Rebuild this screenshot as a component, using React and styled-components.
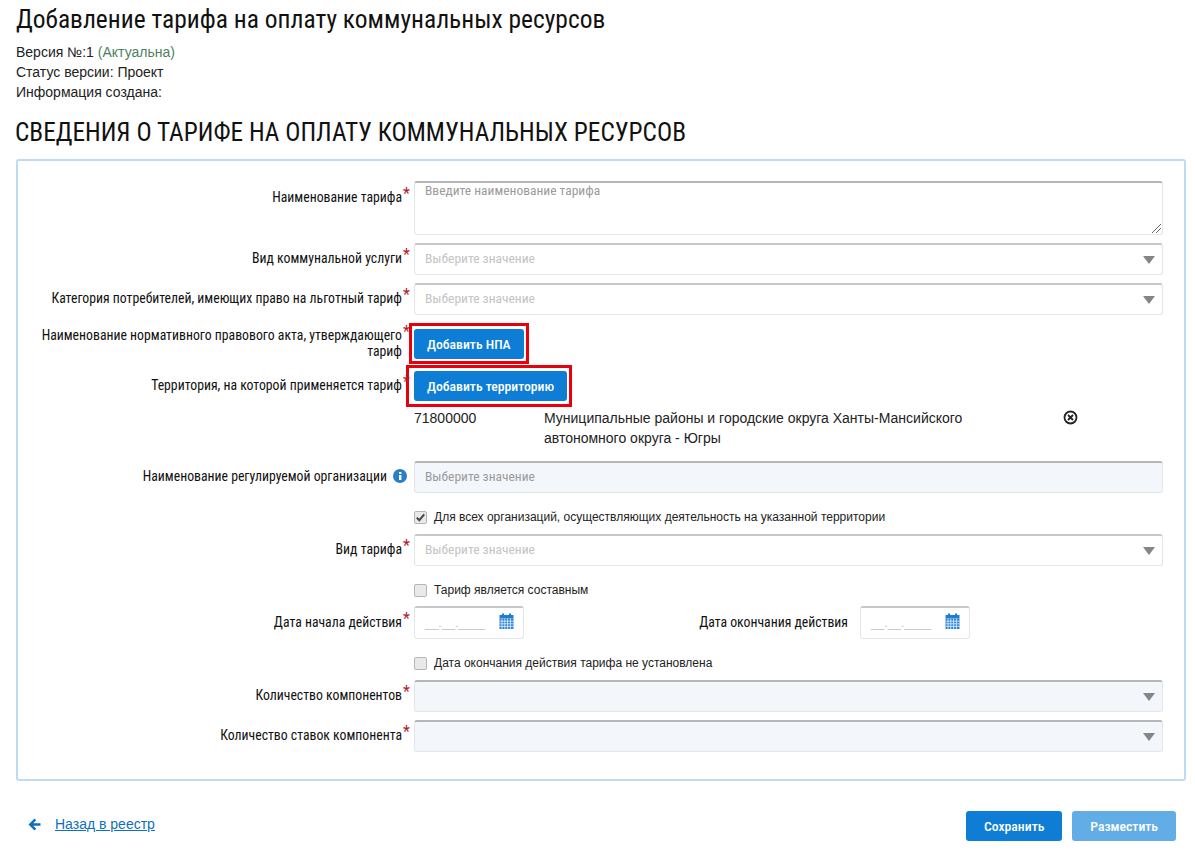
import React from 'react';
import styled, { createGlobalStyle } from 'styled-components';

const GlobalStyle = createGlobalStyle`
  html, body {
    margin: 0;
    padding: 0;
    background: #fff;
    color: #111;
    font-family: "Liberation Sans", Arial, sans-serif;
    font-size: 14px;
  }
  * { box-sizing: border-box; }
`;

const narrow = `"Liberation Sans Narrow", "Roboto Condensed", Roboto, sans-serif`;

const Page = styled.div`
  width: 1195px;
  height: 851px;
  overflow: hidden;
  padding: 5px 9px 0 16px;
`;

const Title = styled.h1`
  margin: 0;
  font: 400 25.45px/28px ${narrow};
  color: #111;
`;

const Meta = styled.div`
  margin-top: 9px;
  font-size: 14px;
  line-height: 20px;
  color: #222;
`;

const Actual = styled.span`
  color: #4f7f62;
`;

const SectionTitle = styled.h2`
  margin: 16px 0 0 -1px;
  font: 400 25.3px/30px ${narrow};
  color: #111;
`;

const Panel = styled.div`
  margin-top: 11px;
  width: 1170px;
  height: 622px;
  border: 2px solid #bcdcf6;
  border-radius: 3px;
  padding: 20px 21px 0 0;
`;

const Row = styled.div`
  display: flex;
  align-items: ${p => p.$align || 'center'};
  margin-bottom: ${p => p.$mb ?? 8}px;
`;

const Label = styled.div`
  flex: 0 0 396px;
  text-align: right;
  font: 400 13.75px/16px ${narrow};
  color: #111;
  padding-top: ${p => p.$pt || 0}px;
  padding-bottom: ${p => (p.$pt ? 0 : 2)}px;
`;

const LabelWrap = styled.span`
  position: relative;
  display: inline-block;
  padding-right: ${p => p.$pr || 12}px;
  width: ${p => (p.$block ? '100%' : 'auto')};
`;

const Star = styled.span`
  position: absolute;
  right: 4px;
  top: -3px;
  color: #b3202a;
  font-size: 16px;
  line-height: 16px;
`;

const Field = styled.div`
  flex: 1;
  position: relative;
  height: ${p => p.$h || 32}px;
  border: 1px solid #e3e6e9;
  border-top: 2px solid ${p => (p.$dark ? '#b4b6b8' : '#c6c8ca')};
  border-radius: 3px;
  background: ${p => (p.$disabled ? '#f3f6fb' : '#fff')};
  padding: ${p => (p.$top ? '0 10px' : '0 10px 3px')};
  display: flex;
  align-items: ${p => (p.$top ? 'flex-start' : 'center')};
  font: 400 13.5px/15px ${narrow};
  color: ${p => (p.$strong ? '#9b9b9b' : '#c4c4c4')};
`;

const Caret = styled.span`
  position: absolute;
  right: 7px;
  top: 11px;
  width: 0;
  height: 0;
  border-left: 6px solid transparent;
  border-right: 6px solid transparent;
  border-top: 8px solid #858585;
`;

const Grip = styled.svg`
  position: absolute;
  right: 0;
  bottom: 0;
`;

const Highlight = styled.div`
  border: 3px solid #e8000d;
  padding: ${p => p.$pad};
  margin-left: ${p => p.$ml}px;
  display: flex;
`;

const Btn = styled.button`
  height: 30px;
  padding: 0 ${p => p.$px || 13}px;
  border: 0;
  border-radius: 3px;
  background: ${p => (p.$muted ? '#63ade6' : '#0d7dd6')};
  color: #fff;
  font: 500 13.7px/16px ${narrow};
`;

const Territory = styled.div`
  display: grid;
  grid-template-columns: 130px 519px 20px;
  margin-left: 396px;
  font-size: 14px;
  line-height: 20px;
  color: #222;
  height: 54px;
  padding-top: 1px;
`;

const TerritoryName = styled.div`
  width: 430px;
`;

const CloseCell = styled.div`
  display: flex;
  height: 16px;
  margin-top: 2px;
`;

const CheckRow = styled.label`
  display: flex;
  align-items: center;
  margin: 0 0 ${p => p.$mb || 0}px 396px;
  height: 16px;
  font-size: 12px;
  color: #222;
`;

const Box = styled.span`
  width: 13px;
  height: 13px;
  border: 1px solid #b5b5b5;
  border-radius: 2px;
  background: #e9e9e9;
  margin-right: 7px;
  display: inline-flex;
  align-items: center;
  justify-content: center;
`;

const DateField = styled.div`
  position: relative;
  width: 110px;
  height: 33px;
  border: 1px solid #e3e6e9;
  border-top: 2px solid #c6c8ca;
  border-radius: 3px;
  padding: 0 10px;
  display: flex;
  align-items: center;
  font-size: 12px;
  color: #c4c4c4;
`;

const CalIcon = styled.svg`
  position: absolute;
  right: 9px;
  top: 5px;
`;

const DateEndLabel = styled.div`
  width: 336px;
  padding: 0 12px 2px 0;
  text-align: right;
  font: 400 13.75px/16px ${narrow};
  color: #111;
`;

const Footer = styled.div`
  display: flex;
  justify-content: space-between;
  align-items: center;
  margin-top: 30px;
  width: 1160px;
`;

const Back = styled.a`
  display: flex;
  align-items: center;
  margin: -4px 0 0 12px;
  color: #0d6fc0;
  font-size: 14px;
  text-decoration: underline;
  gap: 14px;
`;

const FooterButtons = styled.div`
  display: flex;
  gap: 10px;
`;

const InfoDot = styled.svg`
  position: absolute;
  right: 7px;
  top: 1px;
`;

const Req = ({ children, block }) => (
  <LabelWrap $block={block}>
    {children}
    <Star>*</Star>
  </LabelWrap>
);

const SelectField = ({ disabled, placeholder = 'Выберите значение', dark }) => (
  <Field $disabled={disabled} $dark={dark}>
    {placeholder}
    <Caret />
  </Field>
);

const Tick = () => (
  <svg width="11" height="11" viewBox="0 0 11 11">
    <path d="M1.8 5.6 L4.3 8.3 L9.2 2.4" fill="none" stroke="#444" strokeWidth="2" />
  </svg>
);

const Calendar = () => (
  <CalIcon width="15" height="17" viewBox="0 0 15 17">
    <rect x="0.5" y="2" width="14" height="3.5" fill="#1e7fd2" />
    <rect x="3" y="0.5" width="2" height="3" fill="#1e7fd2" />
    <rect x="10" y="0.5" width="2" height="3" fill="#1e7fd2" />
    <rect x="0.5" y="5.5" width="14" height="10.5" fill="#2a84d8" />
    <path d="M3 5.5V16M5.8 5.5V16M8.6 5.5V16M11.4 5.5V16M.5 8.2H14.5M.5 10.8H14.5M.5 13.4H14.5" stroke="#fff" strokeWidth="0.7" />
  </CalIcon>
);

export default function App() {
  return (
    <Page>
      <GlobalStyle />
      <Title>Добавление тарифа на оплату коммунальных ресурсов</Title>
      <Meta>
        <div>Версия №:1 <Actual>(Актуальна)</Actual></div>
        <div>Статус версии: Проект</div>
        <div>Информация создана:</div>
      </Meta>
      <SectionTitle>СВЕДЕНИЯ О ТАРИФЕ НА ОПЛАТУ КОММУНАЛЬНЫХ РЕСУРСОВ</SectionTitle>
      <Panel>
        <Row $align="flex-start">
          <Label $pt={8}><Req>Наименование тарифа</Req></Label>
          <Field $h={54} $top $dark $strong>
            Введите наименование тарифа
            <Grip width="12" height="12" viewBox="0 0 12 12">
              <path d="M2 11 L11 2 M6 11 L11 6" stroke="#666" strokeWidth="1" />
            </Grip>
          </Field>
        </Row>
        <Row>
          <Label><Req>Вид коммунальной услуги</Req></Label>
          <SelectField />
        </Row>
        <Row>
          <Label><Req>Категория потребителей, имеющих право на льготный тариф</Req></Label>
          <SelectField />
        </Row>
        <Row $mb={1}>
          <Label><Req block>Наименование нормативного правового акта, утверждающего тариф</Req></Label>
          <Highlight $ml={-5} $pad="3px 2px 2px">
            <Btn>Добавить НПА</Btn>
          </Highlight>
        </Row>
        <Row $mb={0}>
          <Label><Req>Территория, на которой применяется тариф</Req></Label>
          <Highlight $ml={-8} $pad="3px 2px 3px 5px">
            <Btn>Добавить территорию</Btn>
          </Highlight>
        </Row>
        <Territory>
          <div>71800000</div>
          <TerritoryName>Муниципальные районы и городские округа Ханты-Мансийского автономного округа - Югры</TerritoryName>
          <CloseCell>
            <svg width="15" height="15" viewBox="0 0 15 15">
              <circle cx="7.5" cy="7.5" r="6" fill="none" stroke="#222" strokeWidth="1.8" />
              <path d="M5 5 L10 10 M10 5 L5 10" stroke="#222" strokeWidth="1.8" />
            </svg>
          </CloseCell>
        </Territory>
        <Row $mb={16}>
          <Label>
            <LabelWrap $pr={27}>
              Наименование регулируемой организации
              <InfoDot width="14" height="14" viewBox="0 0 14 14">
                <circle cx="7" cy="7" r="7" fill="#2a7fc4" />
                <rect x="6" y="6" width="2.4" height="5" fill="#fff" />
                <rect x="6" y="3" width="2.4" height="2" fill="#fff" />
              </InfoDot>
            </LabelWrap>
          </Label>
          <Field $disabled $dark $strong>Выберите значение</Field>
        </Row>
        <CheckRow $mb={9}><Box><Tick /></Box>Для всех организаций, осуществляющих деятельность на указанной территории</CheckRow>
        <Row $mb={16}>
          <Label><Req>Вид тарифа</Req></Label>
          <SelectField />
        </Row>
        <CheckRow $mb={8}><Box />Тариф является составным</CheckRow>
        <Row $mb={16}>
          <Label><Req>Дата начала действия</Req></Label>
          <DateField>__.__.____<Calendar /></DateField>
          <DateEndLabel>Дата окончания действия</DateEndLabel>
          <DateField>__.__.____<Calendar /></DateField>
        </Row>
        <CheckRow $mb={9}><Box />Дата окончания действия тарифа не установлена</CheckRow>
        <Row>
          <Label><Req>Количество компонентов</Req></Label>
          <SelectField disabled dark placeholder="" />
        </Row>
        <Row>
          <Label><Req>Количество ставок компонента</Req></Label>
          <SelectField disabled dark placeholder="" />
        </Row>
      </Panel>
      <Footer>
        <Back>
          <svg width="13" height="13" viewBox="0 0 13 13">
            <path d="M6.5 .5 L.5 6.5 L6.5 12.5 L8.2 10.8 L5.2 7.8 H12.5 V5.2 H5.2 L8.2 2.2 Z" fill="#0d6fc0" />
          </svg>
          Назад в реестр
        </Back>
        <FooterButtons>
          <Btn $px={18}>Сохранить</Btn>
          <Btn $px={18} $muted>Разместить</Btn>
        </FooterButtons>
      </Footer>
    </Page>
  );
}
